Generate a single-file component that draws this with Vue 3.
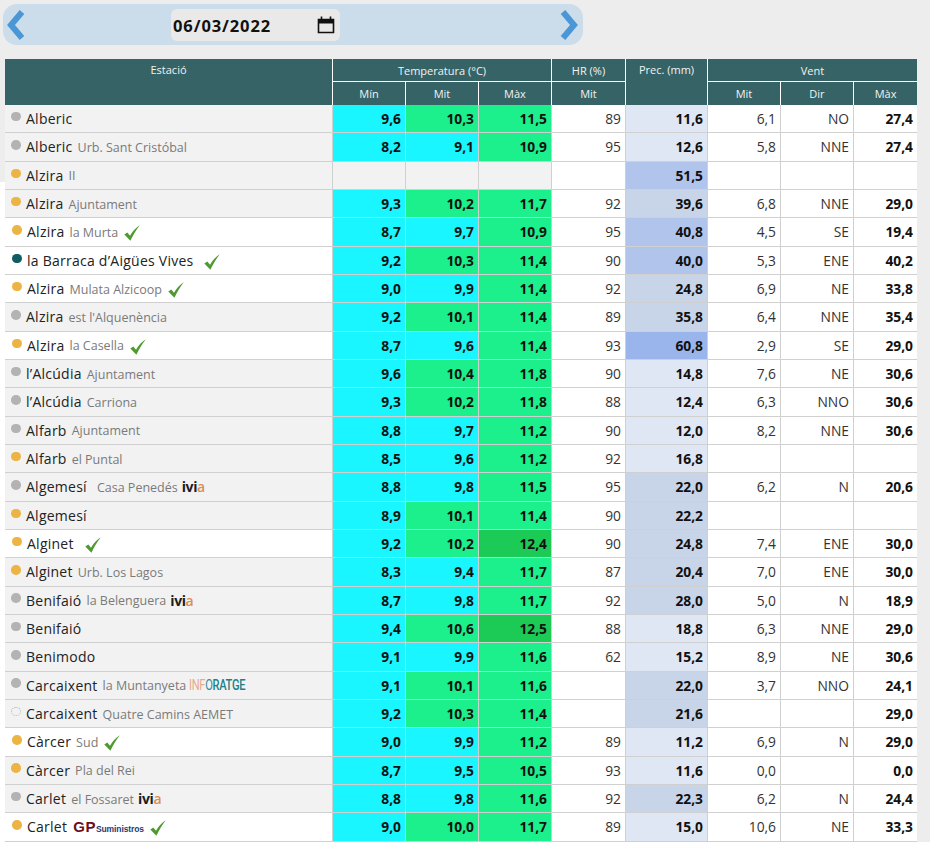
<template>
  <div class="page">
    <div class="date-bar">
      <svg class="arrow" viewBox="0 0 18 32" width="18" height="32">
        <polyline points="15,3 4,16 15,29" fill="none" stroke="#4b97d6" stroke-width="6" />
      </svg>
      <div class="date-field">
        <span class="date-text">06/03/2022</span>
        <svg class="calendar" viewBox="0 0 18 18" width="18" height="18">
          <path d="M1.5 3.5h15v13h-15z" fill="none" stroke="#111" stroke-width="1.6" />
          <path d="M1.5 3h15v4.5h-15z" fill="#111" />
          <path d="M4.5 0.5v3M13.5 0.5v3" stroke="#111" stroke-width="1.6" />
        </svg>
      </div>
      <svg class="arrow" viewBox="0 0 18 32" width="18" height="32">
        <polyline points="3,3 14,16 3,29" fill="none" stroke="#4b97d6" stroke-width="6" />
      </svg>
    </div>

    <div class="table-wrap">
      <table class="stations">
        <colgroup>
          <col class="c-name" />
          <col class="c-t" />
          <col class="c-t" />
          <col class="c-t" />
          <col class="c-hr" />
          <col class="c-prec" />
          <col class="c-t" />
          <col class="c-t" />
          <col class="c-last" />
        </colgroup>
        <thead>
          <tr>
            <th rowspan="2" class="top">Estació</th>
            <th colspan="3">Temperatura (°C)</th>
            <th>HR (%)</th>
            <th rowspan="2" class="top">Prec. (mm)</th>
            <th colspan="3">Vent</th>
          </tr>
          <tr>
            <th>Mín</th>
            <th>Mit</th>
            <th>Màx</th>
            <th>Mit</th>
            <th>Mit</th>
            <th>Dir</th>
            <th>Màx</th>
          </tr>
        </thead>
        <tbody>
          <tr v-for="(r, i) in rows" :key="i">
            <td class="name-cell" :class="{ marked: r.check }">
              <div class="station">
                <span class="dot" :class="r.dot"></span>
                <span class="name">{{ r.name }}</span>
                <span v-if="r.sub" class="sub" :class="{ far: r.far }">{{ r.sub }}</span>
                <span v-if="r.logo === 'ivia'" class="ivia">ivi<b>a</b></span>
                <span v-if="r.logo === 'inforatge'" class="inforatge">INF<i>O</i><b>RATGE</b></span>
                <span v-if="r.logo === 'gp'" class="gp">GP<small>Suministros</small></span>
                <svg v-if="r.check" class="check" :class="{ lone: !r.sub && !r.logo }" viewBox="0 0 16 16" width="16" height="16">
                  <path d="M0.3 9.6l3-2 2.7 3.1C8.4 6.6 11.4 3 15.8 0.3 12.2 4.8 9.2 10 6.4 15.8z" fill="#4f9a30" />
                </svg>
              </div>
            </td>
            <td class="num strong" :class="tempClass(r.min)">{{ r.min }}</td>
            <td class="num strong" :class="tempClass(r.mit)">{{ r.mit }}</td>
            <td class="num strong" :class="tempClass(r.max)">{{ r.max }}</td>
            <td class="num">{{ r.hr }}</td>
            <td class="num strong" :class="precClass(r.prec)">{{ r.prec }}</td>
            <td class="num">{{ r.vm }}</td>
            <td class="num">{{ r.dir }}</td>
            <td class="num strong">{{ r.vx }}</td>
          </tr>
        </tbody>
      </table>
    </div>
  </div>
</template>

<script setup>
const row = (name, sub, dot, min, mit, max, hr, prec, vm, dir, vx, extra = {}) => ({
  name, sub, dot, min, mit, max, hr, prec, vm, dir, vx, ...extra
})

const rows = [
  row('Alberic', '', 'grey', '9,6', '10,3', '11,5', '89', '11,6', '6,1', 'NO', '27,4'),
  row('Alberic', 'Urb. Sant Cristóbal', 'grey', '8,2', '9,1', '10,9', '95', '12,6', '5,8', 'NNE', '27,4'),
  row('Alzira', 'II', 'amber', '', '', '', '', '51,5', '', '', ''),
  row('Alzira', 'Ajuntament', 'amber', '9,3', '10,2', '11,7', '92', '39,6', '6,8', 'NNE', '29,0'),
  row('Alzira', 'la Murta', 'amber', '8,7', '9,7', '10,9', '95', '40,8', '4,5', 'SE', '19,4', { check: true }),
  row('la Barraca d’Aigües Vives', '', 'teal', '9,2', '10,3', '11,4', '90', '40,0', '5,3', 'ENE', '40,2', { check: true }),
  row('Alzira', 'Mulata Alzicoop', 'amber', '9,0', '9,9', '11,4', '92', '24,8', '6,9', 'NE', '33,8', { check: true }),
  row('Alzira', 'est l\'Alquenència', 'grey', '9,2', '10,1', '11,4', '89', '35,8', '6,4', 'NNE', '35,4'),
  row('Alzira', 'la Casella', 'amber', '8,7', '9,6', '11,4', '93', '60,8', '2,9', 'SE', '29,0', { check: true }),
  row('l’Alcúdia', 'Ajuntament', 'grey', '9,6', '10,4', '11,8', '90', '14,8', '7,6', 'NE', '30,6'),
  row('l’Alcúdia', 'Carriona', 'grey', '9,3', '10,2', '11,8', '88', '12,4', '6,3', 'NNO', '30,6'),
  row('Alfarb', 'Ajuntament', 'grey', '8,8', '9,7', '11,2', '90', '12,0', '8,2', 'NNE', '30,6'),
  row('Alfarb', 'el Puntal', 'amber', '8,5', '9,6', '11,2', '92', '16,8', '', '', ''),
  row('Algemesí', 'Casa Penedés', 'grey', '8,8', '9,8', '11,5', '95', '22,0', '6,2', 'N', '20,6', { logo: 'ivia', far: true }),
  row('Algemesí', '', 'amber', '8,9', '10,1', '11,4', '90', '22,2', '', '', ''),
  row('Alginet', '', 'amber', '9,2', '10,2', '12,4', '90', '24,8', '7,4', 'ENE', '30,0', { check: true }),
  row('Alginet', 'Urb. Los Lagos', 'amber', '8,3', '9,4', '11,7', '87', '20,4', '7,0', 'ENE', '30,0'),
  row('Benifaió', 'la Belenguera', 'grey', '8,7', '9,8', '11,7', '92', '28,0', '5,0', 'N', '18,9', { logo: 'ivia' }),
  row('Benifaió', '', 'grey', '9,4', '10,6', '12,5', '88', '18,8', '6,3', 'NNE', '29,0'),
  row('Benimodo', '', 'grey', '9,1', '9,9', '11,6', '62', '15,2', '8,9', 'NE', '30,6'),
  row('Carcaixent', 'la Muntanyeta', 'grey', '9,1', '10,1', '11,6', '', '22,0', '3,7', 'NNO', '24,1', { logo: 'inforatge' }),
  row('Carcaixent', 'Quatre Camins AEMET', 'none', '9,2', '10,3', '11,4', '', '21,6', '', '', '29,0'),
  row('Càrcer', 'Sud', 'amber', '9,0', '9,9', '11,2', '89', '11,2', '6,9', 'N', '29,0', { check: true }),
  row('Càrcer', 'Pla del Rei', 'amber', '8,7', '9,5', '10,5', '93', '11,6', '0,0', '', '0,0'),
  row('Carlet', 'el Fossaret', 'grey', '8,8', '9,8', '11,6', '92', '22,3', '6,2', 'N', '24,4', { logo: 'ivia' }),
  row('Carlet', '', 'amber', '9,0', '10,0', '11,7', '89', '15,0', '10,6', 'NE', '33,3', { logo: 'gp', check: true })
]

function toNumber(text) {
  return parseFloat(text.replace(',', '.'))
}

function tempClass(text) {
  if (!text) return 'empty'
  const v = toNumber(text)
  if (v >= 12) return 'warm'
  return v >= 10 ? 'mild' : 'cool'
}

function precClass(text) {
  const v = toNumber(text)
  if (v >= 60) return 'rain-4'
  if (v >= 40) return 'rain-3'
  return v >= 20 ? 'rain-2' : 'rain-1'
}
</script>

<style>
html, body {
  margin: 0;
  background: #ededed;
}
</style>

<style scoped>
.page {
  width: 930px;
  height: 842px;
  overflow: hidden;
  font-family: "Open Sans", sans-serif;
  color: #111;
}

.date-bar {
  box-sizing: border-box;
  width: 580px;
  height: 41px;
  margin: 4px 0 14px 3px;
  padding: 0 4px;
  display: flex;
  align-items: center;
  background: #cbdcea;
  border-radius: 14px;
}

.arrow {
  flex: none;
}

.date-field {
  box-sizing: border-box;
  width: 169px;
  height: 32px;
  margin: 1px 220px 0 146px;
  padding: 0 5px 0 2px;
  display: flex;
  align-items: center;
  justify-content: space-between;
  background: #e9e9e9;
  border-radius: 6px;
}

.date-text {
  padding-top: 1px;
  font-size: 16.5px;
  font-weight: 700;
  letter-spacing: 0.9px;
}

.table-wrap {
  padding: 0 0 0 5px;
  background: linear-gradient(to right, #fff 5px, transparent 5px) 0 123px no-repeat;
}

.stations {
  width: 912px;
  table-layout: fixed;
  border-collapse: separate;
  border-spacing: 0;
  font-size: 13.8px;
}

.c-name { width: 328px; }
.c-t { width: 73px; }
.c-hr { width: 74px; }
.c-prec { width: 82px; }
.c-last { width: 63px; }

th {
  height: 22px;
  padding: 0;
  background: #366466;
  color: #f2f2f2;
  font-size: 11px;
  font-weight: 500;
  border-right: 1px solid #fff;
  border-bottom: 1px solid #fff;
}

thead tr:last-child th {
  height: 23px;
  border-bottom: 0;
}

th:last-child {
  border-right: 0;
}

th.top {
  vertical-align: top;
  padding-top: 3px;
  border-bottom: 0;
}

td {
  height: 28.33px;
  box-sizing: border-box;
  padding: 0;
  background: #fff;
  border-right: 1px solid #d0d0d0;
  border-bottom: 1px solid #d0d0d0;
}

td:last-child {
  border-right: 0;
}

.name-cell {
  background: #f2f2f2;
  padding-left: 6px;
  white-space: nowrap;
}

.name-cell.marked {
  background: #fff;
  padding-left: 7px;
}

.station {
  display: flex;
  align-items: center;
}

.dot {
  flex: none;
  width: 9.5px;
  height: 9.5px;
  margin: -4px 5.5px 0 0;
  border-radius: 50%;
}

.dot.grey { background: #b3b3b3; }
.dot.amber { background: #ecb444; }
.dot.teal { background: #0f5c63; }
.dot.none { border: 1px dotted #b5b5b5; width: 7.5px; height: 7.5px; }

.name {
  font-size: 14px;
  letter-spacing: 0.25px;
  color: #222;
}

.sub {
  margin-left: 5px;
  padding-top: 1px;
  font-size: 12.5px;
  color: #7a7a7a;
}

.sub.far {
  margin-left: 10px;
}

.ivia {
  margin-left: 4px;
  font-size: 14px;
  font-weight: 700;
  letter-spacing: -0.4px;
  color: #1c1c1c;
}

.ivia b {
  font-weight: 600;
  color: #df8b4f;
}

.inforatge {
  display: inline-block;
  margin-left: 3px;
  width: 54px;
  font-family: "Roboto", sans-serif;
  font-size: 15px;
  letter-spacing: -0.4px;
  color: #eaa98a;
  transform: scaleX(0.74);
  transform-origin: left center;
}

.inforatge i {
  font-style: normal;
  color: #2f8d9c;
}

.inforatge b {
  font-weight: 500;
  color: #1f7f86;
}

.gp {
  margin-left: 6px;
  font-family: "Liberation Sans", sans-serif;
  font-size: 15px;
  font-weight: 700;
  letter-spacing: 0.5px;
  color: #6b0f1c;
}

.gp small {
  font-size: 8.5px;
  letter-spacing: -0.1px;
  color: #1f3a73;
}

.check {
  flex: none;
  margin: 3px 0 0 6px;
}

.check.lone {
  margin-left: 11px;
}

.num {
  padding-right: 4px;
  text-align: right;
  color: #333;
}

.num.strong {
  font-weight: 700;
  color: #111;
}

.cool { background: #19f6ff; }
.mild { background: #1bf08c; }
.warm { background: #1ccb55; }
.empty { background: #f2f2f2; }
.rain-1 { background: #dfe6f4; }
.rain-2 { background: #c8d4e8; }
.rain-3 { background: #b0c4ec; }
.rain-4 { background: #9ab5ec; }
</style>
